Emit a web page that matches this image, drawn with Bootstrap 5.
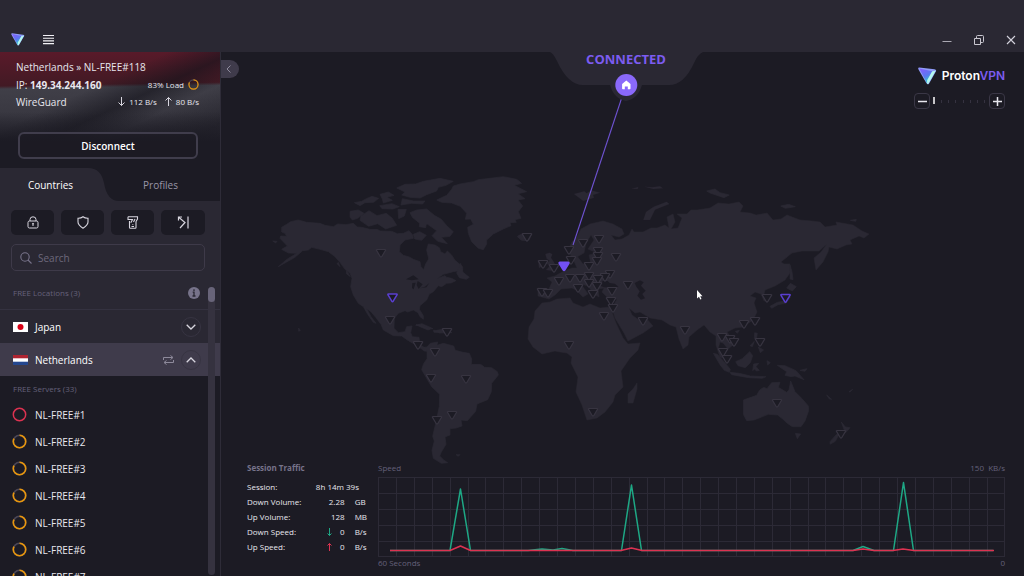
<!DOCTYPE html>
<html lang="en">
<head>
<meta charset="utf-8">
<meta name="viewport" content="width=device-width, initial-scale=1">
<title>ProtonVPN</title>
<link rel="stylesheet" href="https://cdn.jsdelivr.net/npm/bootstrap@5.3.0/dist/css/bootstrap.min.css">
<style>
:root{--deep:#1c1b24;--raised:#2a2833;--muted:#65617a;--accent:#7c5cf0;--amber:#e8960c}
body{font-family:"Open Sans",sans-serif;font-size:10px;line-height:14px;color:#e8e7ee;background:var(--deep);height:100vh;overflow:hidden}
button{color:inherit}
svg{display:block;flex:none}
.topbar{flex:none;background:var(--raised);height:52px;padding:27px 8px 0 11px;gap:18px}
.window-buttons{gap:22px}
.workspace{min-height:0}
.plain{background:none;border:0;padding:0}
.sidebar{width:221px;flex:none;background:var(--raised);border-right:1px solid #2e2c38}
.status{flex:none;height:116px;padding:8px 21px 0 16px;background:linear-gradient(180deg,#0000 60px,#1c1b24 90px),linear-gradient(155deg,#0000 36%,#14131b99 50%,#0000 62%,#14131b66 80%,#0000),linear-gradient(179deg,#5a1a2a 0,#421a24 34px,#403f48 37px,#33323b 84px,#1c1b24 100%)}
.status .row-line{height:17px}
.status .meter{font-size:8px}
.disconnect{font-weight:600;height:27px;margin-left:2px;border:2px solid #403d4c;border-radius:6px;color:#fff;background:#1c1b2488;line-height:14px;width:180px;padding:0}
.tabs-row{flex:none;height:33px;background:var(--deep)}
.tabs-row button{position:relative;padding:0}
.tabs-row .tab-shape{position:absolute;left:0;top:0}
.tabs-row .first{width:101px}
.tabs-row .idle{color:#9996a6}
.tools{flex:none;padding:9px 15px 0 11px;gap:7px}
.tools button{height:25px;background:var(--deep);border-radius:5px}
.search{flex:none;margin:9px 15px 0 11px;height:27px;border:1px solid #3e3a49;border-radius:5px;padding:0 8px;gap:6px}
.search input{background:none;border:0;outline:0;min-width:0;color:#fff;font-size:10px;padding:0}
.search input::placeholder{color:#6d697c;opacity:1}
.caption{font-size:8px;color:var(--muted);padding:0 20px 0 13px}
.locations{height:39px;padding-top:6px;border-bottom:1px solid #343240}
.country{height:33px;padding:0 19px 0 13px;gap:7px;color:#fff}
.country.open{background:#3f3b4b}
.round{width:20px;height:20px;border:1px solid #373442!important;border-radius:50%}
.servers{background:var(--deep)}
.servers .caption{height:25px}
.servers li{height:27px;padding-left:12px;gap:8px}
.scrolltrack{position:absolute;right:5px;top:16px;bottom:1px;width:7px;background:#35323f;border-radius:4px}
.scrollthumb{height:15px;background:#686479;border-radius:4px}
.world{position:absolute;inset:0;width:100%;height:100%}
.collapse-tab{position:absolute;left:0;top:8px;width:18px;height:18px;background:#3f3b4b;border-radius:0 9px 9px 0}
.connected{position:absolute;left:0;right:0;top:0;margin-left:7px;text-align:center;color:var(--accent);font-size:13px;font-weight:700}
.brand-block{position:absolute;right:19px;top:15px}
.brand-name{gap:5px}
.wordmark{font-family:Inter,sans-serif;font-size:12px;font-weight:600;color:#fff}
.wordmark span{color:var(--accent)}
.zoom{gap:3px}
.zoom button{width:16px;height:16px;border:1px solid #3a3746;border-radius:4px}
.traffic{position:absolute;left:26px;right:19px;bottom:7px;gap:11px}
.stats{width:120px;flex:none;font-size:8px}
.stats h2{font-size:8px;font-weight:700;color:#77738a;line-height:14px;margin:0 0 4px}
.stats table{width:120px;line-height:15px}
.stats th{font-weight:400}
.stats td,.stats th{padding:0;white-space:nowrap}
.stats .unit{width:22px;padding-left:10px}
.chart-label{font-size:8px;color:var(--muted);line-height:14px}
.chart{width:100%;height:80px;margin-top:2px}
.chart-foot{height:12px;line-height:12px}
</style>
</head>
<body class="d-flex flex-column">
<svg width="0" height="0" class="position-absolute" aria-hidden="true">
  <defs>
    <linearGradient id="brand-face" x1="0" y1="0" x2=".5" y2="1"><stop offset="0" stop-color="#8a5cff"/><stop offset=".6" stop-color="#5a78f0"/><stop offset="1" stop-color="#30d8c8"/></linearGradient>
    <symbol id="logo" viewBox="0 0 18 17"><path d="M1.200.4 15.600 2.200q2.200.3 1.300 2.100L10.500 15.500q-1 1.500-2.200.2Q7.700 15 .5 2.300-.4.500 1.200.400Z" fill="#8f9cf8"/><path d="M1.200 1.400 13.600 3.900 9.200 12 8.700 15.600Z" fill="url(#brand-face)"/><path d="M13.300 4.200 16.900 3.400 10 15.700 8.700 16.200 8.600 12.800Z" fill="#b4f8ee"/></symbol>
    <symbol id="pin" viewBox="-7 -6 14 13" overflow="visible"><path d="M-4-3.500H4Q5-3.500 4.500-2.600L.7 3.700Q0 4.700-.7 3.700L-4.500-2.600Q-5-3.500-4-3.500Z"/></symbol>
    <symbol id="load" viewBox="0 0 14 14"><circle cx="7" cy="7" r="5.800" fill="none" stroke="#4a4656" stroke-width="1.500"/><circle cx="7" cy="7" r="5.800" fill="none" stroke="#e8960c" stroke-width="1.500" pathLength="100" stroke-dasharray="83 17" transform="rotate(-90 7 7)"/></symbol>
  </defs>
</svg>

<header class="topbar d-flex align-items-center">
  <svg width="14" height="13"><use href="#logo"/></svg>
  <button class="plain" aria-label="Menu"><svg width="11" height="11" stroke="#f2f1f6" stroke-width="1.100"><path d="M0 1.500H11M0 4.200H11M0 6.900H11M0 9.600H11"/></svg></button>
  <div class="window-buttons d-flex align-items-center ms-auto">
    <button class="plain" aria-label="Minimize"><svg width="10" height="10" stroke="#aaa8b3"><path d="M.5 6.500H9.500"/></svg></button>
    <button class="plain" aria-label="Restore"><svg width="10" height="10" fill="none" stroke="#c9c7d0"><path d="M.5 3.500H6.500V9.500H.5ZM2.500 3.500V1.500Q2.500.5 3.500.5H8.500Q9.500.5 9.500 1.500V6.500Q9.500 7.500 8.500 7.500H6.500"/></svg></button>
    <button class="plain" aria-label="Close"><svg width="10" height="10" stroke="#d4d2dc" stroke-width="1.100"><path d="M1 1 9 9M9 1 1 9"/></svg></button>
  </div>
</header>

<div class="workspace d-flex flex-grow-1 overflow-hidden">
<aside class="sidebar d-flex flex-column overflow-hidden">
  <section class="status">
    <div class="server">Netherlands » NL-FREE#118</div>
    <div class="row-line d-flex align-items-center justify-content-between pt-1"><span>IP: <b>149.34.244.160</b></span><span class="meter d-flex align-items-center gap-1">83% Load <svg width="11" height="11"><use href="#load"/></svg></span></div>
    <div class="row-line d-flex align-items-center justify-content-between pt-1"><span>WireGuard</span><span class="meter d-flex align-items-center gap-1"><svg width="7" height="9" fill="none" stroke="#d8d6df"><path d="M3.500 0V8.500M.5 5.500 3.500 8.500 6.500 5.500"/></svg>112 B/s <svg class="ms-1" width="7" height="9" fill="none" stroke="#d8d6df"><path d="M3.500 9V.5M.5 3.500 3.500.5 6.500 3.500"/></svg>80 B/s</span></div>
    <div class="pt-3"><button class="disconnect mt-2">Disconnect</button></div>
  </section>
  <div class="tabs-row position-relative d-flex" role="tablist">
    <svg class="tab-shape" width="220" height="33"><path d="M0 33V0H88Q101 0 104 15 107 33 119 33Z" fill="#2a2833"/></svg>
    <button class="plain first text-white" role="tab" aria-selected="true">Countries</button>
    <button class="plain idle flex-fill" role="tab" aria-selected="false">Profiles</button>
  </div>
  <div class="tools d-flex">
    <button class="plain flex-fill d-flex align-items-center justify-content-center" aria-label="Secure Core"><svg width="12" height="13" fill="none" stroke="#d8d6df"><rect x="1" y="5" width="10" height="7" rx="1.500"/><path d="M3 5V3.500Q3 .8 6 .8T9 3.500V5M6 7.500V10"/><circle cx="6" cy="7.700" r=".5"/></svg></button>
    <button class="plain flex-fill d-flex align-items-center justify-content-center" aria-label="NetShield"><svg width="12" height="13" fill="none" stroke="#d8d6df" stroke-width="1.100"><path d="M6 .8Q8 2.400 11 2.300V6Q11 9 6 12.200 1 9 1 6V2.300Q4 2.400 6 .8Z"/></svg></button>
    <button class="plain flex-fill d-flex align-items-center justify-content-center" aria-label="Kill Switch"><svg width="12" height="13" fill="none" stroke="#d8d6df" stroke-width="1.100"><path d="M2.500 5V11.500Q2.500 12.300 3.300 12.300H8.300Q9 12.300 9 11.500V5.500M1 .8H10.500V3L9 5.500M1 .8V3.500H5.500L3.800 6.800M8 3 6.500 6"/><path d="M5.800 8V8.800M4.500 10.500H7"/></svg></button>
    <button class="plain flex-fill d-flex align-items-center justify-content-center" aria-label="Port forwarding"><svg width="13" height="13" fill="none" stroke="#d8d6df" stroke-width="1.200"><path d="M2 1.500 8 6.500 3 12M1.500 4.500V1H5M11 .5V12.500"/></svg></button>
  </div>
  <label class="search d-flex align-items-center"><svg width="12" height="12" fill="none" stroke="#77738a" stroke-width="1.100"><circle cx="5" cy="5" r="4.200"/><path d="M8 8 11.500 11.500"/></svg><input type="search" class="flex-fill" placeholder="Search" aria-label="Search"></label>
  <div class="position-relative flex-grow-1 overflow-hidden">
    <div class="locations caption d-flex align-items-center justify-content-between"><span>FREE Locations (3)</span><svg width="12" height="12"><circle cx="6" cy="6" r="6" fill="#77738a"/><path d="M6 2.300V4M4.700 5.200H6V9M4.500 9H7.500" fill="none" stroke="#2a2833" stroke-width="1.300"/></svg></div>
    <div class="country d-flex align-items-center"><svg width="15" height="10"><path d="M0 0H15V10H0Z" fill="#fff"/><circle cx="7.500" cy="5" r="3" fill="#d80016"/></svg><span>Japan</span><button class="plain round ms-auto d-flex align-items-center justify-content-center" aria-label="Expand Japan"><svg width="10" height="6" fill="none" stroke="#d8d6df" stroke-width="1.300"><path d="M.7.700 5 5 9.300.7"/></svg></button></div>
    <div class="country open d-flex align-items-center"><svg width="15" height="10"><path d="M0 0H15V10H0Z" fill="#fff"/><path d="M0 0H15V3.300H0Z" fill="#ae2431"/><path d="M0 6.700H15V10H0Z" fill="#24478f"/></svg><span>Netherlands</span><svg class="ms-auto" width="11" height="10" fill="none" stroke="#8e8a9b"><path d="M.5 5V2.500H9.500M7.500.5 10 2.500 7.500 4.500M10.500 5V7.500H1.500M3.500 5.500 1 7.500 3.500 9.500"/></svg><button class="plain round d-flex align-items-center justify-content-center" aria-label="Collapse Netherlands"><svg width="10" height="6" fill="none" stroke="#d8d6df" stroke-width="1.300"><path d="M.7 5.300 5 1 9.300 5.300"/></svg></button></div>
    <div class="servers">
      <div class="caption d-flex align-items-center">FREE Servers (33)</div>
      <ul class="list-unstyled mb-0">
        <li class="d-flex align-items-center"><svg width="15" height="15" fill="none" stroke="#dc3251" stroke-width="1.500"><circle cx="7.500" cy="7.500" r="6.200"/></svg>NL-FREE#1</li>
        <li class="d-flex align-items-center"><svg width="15" height="15"><use href="#load"/></svg>NL-FREE#2</li>
        <li class="d-flex align-items-center"><svg width="15" height="15"><use href="#load"/></svg>NL-FREE#3</li>
        <li class="d-flex align-items-center"><svg width="15" height="15"><use href="#load"/></svg>NL-FREE#4</li>
        <li class="d-flex align-items-center"><svg width="15" height="15"><use href="#load"/></svg>NL-FREE#5</li>
        <li class="d-flex align-items-center"><svg width="15" height="15"><use href="#load"/></svg>NL-FREE#6</li>
        <li class="d-flex align-items-center"><svg width="15" height="15"><use href="#load"/></svg>NL-FREE#7</li>
      </ul>
    </div>
    <div class="scrolltrack"><div class="scrollthumb"></div></div>
  </div>
</aside>

<main class="position-relative flex-grow-1 overflow-hidden">
  <svg class="world" viewBox="221 52 803 524" preserveAspectRatio="xMidYMin meet" role="img" aria-label="World map of server locations">
    <g fill="#2a2833" stroke="#2a2833" stroke-width=".5" stroke-linejoin="round">
      <!-- North America and Greenland -->
      <g transform="translate(270 170) scale(.33333)" stroke-width="2">
        <path d="M35 172 50 163 62 155 85 150 110 157 150 160 165 166 190 170 203 162 228 164 250 160 262 171 275 172 300 178 322 178 330 183 365 184 382 191 400 190 417 182 428 195 430 205 405 210 390 225 388 245 400 256 418 261 430 268 450 275 453 290 461 299 467 282 476 267 470 240 475 222 495 225 508 233 512 245 525 252 532 243 545 255 555 271 578 290 578 300 550 305 520 313 500 326 525 317 530 322 545 325 558 332 543 339 530 340 515 350 505 347 490 365 478 372 470 390 450 407 448 418 460 437 460 448 450 440 444 428 430 420 413 426 405 422 385 430 373 445 372 475 385 488 405 485 410 470 426 468 422 488 427 500 447 502 450 525 468 535 478 531 490 538 480 545 463 543 440 526 415 512 395 498 370 497 340 480 333 463 318 443 303 425 290 416 303 440 318 460 310 457 293 433 280 410 265 400 250 375 242 350 246 325 240 310 225 298 210 277 195 260 175 245 150 238 125 232 115 240 98 242 75 262 50 276 25 290 52 267 80 250 55 249 35 238 52 228 30 205 32 198 50 199 45 190 35 186Z"/>
        <path d="M500 90 530 76 545 58 550 48 570 42 610 35 625 29 660 25 700 20 740 28 755 40 733 46 770 65 744 71 765 86 744 90 758 108 745 125 753 145 735 149 739 157 720 158 723 167 700 177 670 192 650 210 650 222 640 239 625 235 605 215 595 190 593 172 610 163 602 147 586 148 590 130 571 109 545 99 515 97Z"/>
        <path d="M380 54 405 43 437 42 460 34 510 25 550 34 528 46 505 52 500 63 470 74 450 84 420 82 395 75 405 66ZM397 86 431 93 465 93 458 102 425 100 393 105ZM240 124 265 120 282 130 263 145 247 150 240 141ZM253 98 275 94 289 86 306 79 326 85 311 97 285 98 270 107ZM330 73 355 66 372 76 351 82 367 91 340 99 337 87ZM273 138 297 122 321 137 349 130 367 145 380 166 347 177 323 161 296 169 270 151ZM384 118 409 118 403 138 386 146ZM420 128 440 120 470 117 493 136 514 148 531 168 550 185 540 199 514 202 532 221 503 214 486 197 500 182 473 163 447 158 427 142ZM430 193 449 185 469 196 455 211 434 207ZM329 107 366 101 388 110 369 117 336 116ZM450 150 469 160 467 173 448 170ZM572 280 579 307 598 322 589 328 568 323 560 309ZM742 200 761 192 780 200 774 212 755 211ZM8 213 21 214 17 219ZM86 474 91 482 86 484ZM205 277 210 290 201 281ZM230 302 241 320 229 311ZM437 466 456 461 489 476 477 477 454 467ZM500 481 518 478 546 488 507 489Z"/>
        <path d="M408 328 430 316 446 328 425 331ZM427 339 437 338 431 358 426 354ZM443 333 458 343 446 357 440 345ZM450 355 465 350 478 339 469 352Z" fill="#1c1b24" stroke="none"/>
      </g>
      <!-- South America -->
      <path transform="translate(360 320) scale(.33333)" stroke-width="2" d="M185 83 201 81 211 70 233 66 231 76 250 70 281 78 286 91 309 97 328 100 335 117 334 133 362 133 374 142 395 143 412 155 415 165 395 190 394 215 383 239 351 252 347 274 322 302 303 300 306 318 289 324 270 326 270 345 255 351 258 373 244 396 239 408 252 421 263 428 244 430 220 415 216 391 223 363 218 349 229 302 238 259 239 223 215 200 203 180 185 149 190 133 201 116 201 91ZM288 404 300 404 295 409ZM168 14 185 15 211 27 204 30 180 20ZM220 31 240 32 248 38 222 37Z"/>
      <!-- Africa and Madagascar -->
      <path d="M542 303 550 302 557 299 570 298 573 303 583 307 590 304 600 308 610 307 616 323 623 338 628 344 640 343 638 350 630 358 621 371 623 387 615 395 613 402 605 412 597 418 587 420 582 405 576 392 578 377 571 363 572 357 567 353 560 352 555 351 542 354 533 347 528 339 529 327 534 319 535 311ZM637 383 637 389 633 403 628 403 628 394 633 389Z"/>
      <!-- Europe and Asia -->
      <path d="M568 250 572 242 577 237 581 229 590 224 603 221 613 224 622 229 624 234 619 237 611 235 615 240 622 239 629 235 632 229 634 232 643 232 651 228 657 228 665 225 669 228 667 217 673 214 675 222 671 229 678 228 682 218 677 214 687 214 691 210 697 210 710 208 718 203 729 204 739 202 743 206 740 212 750 213 756 215 767 213 773 220 781 219 787 215 800 220 812 221 820 222 825 227 837 225 836 222 853 225 862 231 869 234 864 238 859 236 850 240 852 244 846 245 837 249 829 247 828 252 823 262 816 270 814 258 821 252 827 244 819 251 810 251 802 251 792 253 781 262 784 264 790 264 790 273 785 280 775 286 765 290 764 294 769 300 764 301 761 294 755 292 750 296 756 298 754 303 757 312 753 320 743 327 735 328 727 332 733 340 733 345 728 349 723 343 720 342 718 349 723 358 720 357 716 345 716 336 710 332 704 325 697 330 689 337 688 345 683 349 679 339 676 327 670 325 662 320 650 318 640 312 635 313 629 308 632 315 639 320 646 318 653 326 643 333 628 341 624 333 615 318 612 308 617 299 607 297 602 292 604 288 598 289 599 297 594 294 588 286 581 284 588 294 583 297 576 290 572 288 561 289 555 295 549 299 538 296 538 288 549 289 552 282 547 278 555 276 562 272 572 268 577 268 573 259 577 256 583 264 591 264 589 255 597 253 588 249 594 240 591 235 586 243 584 253 577 257 571 256Z"/>
      <g transform="translate(510 170) scale(.33333)">
        <path d="M400 150 408 126 431 110 470 95 478 102 435 119 420 150ZM192 72 223 64 230 70 243 61 270 68 249 75 252 83 220 93ZM106 252 119 248 127 253 123 263 132 277 142 296 126 302 108 300 119 289 110 280 119 272 110 266ZM85 274 98 273 103 286 87 294ZM23 197 38 190 64 195 59 210 32 209ZM365 56 385 51 383 57ZM404 50 426 52 450 49 459 55 430 57Z"/>
        <g fill="#1c1b24"><path d="M266 346 279 332 293 333 299 339 315 341 325 350 309 354 282 352ZM374 339 390 331 401 337 393 347 407 362 397 372 405 385 393 389 382 377 389 364 379 350Z"/></g>
      </g>
      <!-- Pacific islands, Japan, Indonesia, Australia, New Zealand -->
      <path transform="translate(690 190) scale(.33333)" stroke-width="2" d="M50 3 75-3 90 8 118 15 102 23 78 15 60 9ZM272 48 296 43 316 50 286 55ZM481 91 499 88 497 94ZM300 225 306 245 309 269 300 267ZM301 280 319 290 307 303 290 294ZM294 312 301 322 288 340 264 344 245 355 240 349 262 337 284 333ZM194 428 202 430 199 447 205 456 193 445ZM205 471 221 480 211 488ZM180 467 193 454 187 470ZM70 490 82 493 102 515 121 538 118 547 103 541 90 524ZM120 547 148 550 181 558 228 560 217 565 176 563 125 554ZM137 515 157 506 179 485 188 497 181 518 166 533 144 527ZM191 522 206 520 198 530 208 541 199 543 194 537 188 542ZM231 512 233 525 241 518ZM262 526 285 527 318 542 342 569 315 558 303 560 285 556 290 545ZM330 541 351 536 345 544ZM160 630 183 622 200 616 209 600 221 592 231 596 245 578 270 577 265 592 290 607 297 600 302 573 315 605 335 625 355 648 356 662 345 693 333 710 307 710 292 700 278 687 263 675 235 673 215 681 192 690 170 692 160 673ZM316 730 332 732 322 746ZM454 696 466 711 480 713 471 724 456 735 463 721ZM450 727 436 754 420 763 420 755 438 735ZM410 615 425 628 418 627ZM477 605 488 598 480 606ZM136 424 148 421 142 430Z"/>
    </g>
    <g fill="#1c1b24" stroke="#373440" stroke-width="1.200" id="pins"></g>
    <!-- Active route -->
    <path d="M622 97 573 245" fill="none" stroke="#7c5cf0" stroke-width="1.100" opacity=".85"/>
    <g stroke="#5a3fd0" stroke-width="1.500" fill="#1c1b24"><use href="#pin" x="385.500" y="291.500" width="14" height="13"/><use href="#pin" x="778.500" y="292" width="14" height="13"/><use href="#pin" x="557" y="260" width="14" height="13" fill="#7350f5" stroke="#7350f5" stroke-width="2"/></g>
    <!-- Connection plate -->
    <path d="M550 52Q553 53 557 61 568 85 583 85H610Q614 99 626 101 638 99 642 85H669Q684 85 694 63 698 54 703 52Z" fill="#2a2833"/>
    <circle cx="626.300" cy="85" r="11" fill="#8a69fa"/><path d="M626.300 80.500 630.500 84V88.500Q630.500 89.300 629.700 89.300H627.800V86.500H624.800V89.300H622.900Q622.100 89.300 622.100 88.500V84Z" fill="#fff"/>
    <path d="M697 290V298.500L699 296.700 700.300 299.500 701.500 299 700.200 296.300H702.500Z" fill="#fff"/>
  </svg>

  <button class="plain collapse-tab d-flex align-items-center justify-content-center" aria-label="Collapse sidebar"><svg class="me-1" width="5" height="8" fill="none" stroke="#8f8b9d"><path d="M4.500.5 1 4 4.500 7.500"/></svg></button>
  <div class="connected">CONNECTED</div>

  <div class="brand-block d-flex flex-column align-items-end">
    <div class="brand-name d-flex align-items-center"><svg width="19" height="18"><use href="#logo"/></svg><span class="wordmark">Proton<span>VPN</span></span></div>
    <div class="zoom d-flex align-items-center mt-2">
      <button class="plain d-flex align-items-center justify-content-center" aria-label="Zoom out"><svg width="9" height="9" stroke="#e8e7ee" stroke-width="1.500"><path d="M0 4.500H9"/></svg></button>
      <svg width="53" height="8" stroke="#353240"><path d="M8.500 3V6M15.500 3V6M22.500 3V6M30.500 3V6M37.500 3V6M44.500 3V6M51.500 3V6"/><path d="M1 0V7" stroke="#fff" stroke-width="1.500"/></svg>
      <button class="plain d-flex align-items-center justify-content-center" aria-label="Zoom in"><svg width="9" height="9" stroke="#e8e7ee" stroke-width="1.500"><path d="M0 4.500H9M4.500 0V9"/></svg></button>
    </div>
  </div>

  <section class="traffic d-flex">
    <div class="stats">
      <h2>Session Traffic</h2>
      <table>
        <tr><th scope="row">Session:</th><td class="text-end" colspan="2"><span class="me-2">8h 14m 39s</span></td></tr>
        <tr><th scope="row">Down Volume:</th><td class="text-end">2.28</td><td class="unit">GB</td></tr>
        <tr><th scope="row">Up Volume:</th><td class="text-end">128</td><td class="unit">MB</td></tr>
        <tr><th scope="row">Down Speed:</th><td><span class="d-flex align-items-center justify-content-end gap-2"><svg width="5" height="8" fill="none" stroke="#1ea885"><path d="M2.500 0V7.500M.5 5.500 2.500 7.500 4.500 5.500"/></svg>0</span></td><td class="unit">B/s</td></tr>
        <tr><th scope="row">Up Speed:</th><td><span class="d-flex align-items-center justify-content-end gap-2"><svg width="5" height="8" fill="none" stroke="#dc3251"><path d="M2.500 8V.5M.5 2.500 2.500.5 4.500 2.500"/></svg>0</span></td><td class="unit">B/s</td></tr>
      </table>
    </div>
    <div class="flex-grow-1">
      <div class="chart-label d-flex justify-content-between"><span>Speed</span><span>150&nbsp; KB/s</span></div>
      <svg class="chart" viewBox="0 0 627 80" preserveAspectRatio="none" role="img" aria-label="Speed over 60 seconds">
        <g id="grid" stroke="#2c2a36" stroke-width="1"></g>
        <g fill="none" stroke-width="1.500" stroke-linejoin="round">
          <path stroke="#1ea885" d="M12 73.500H72L82.500 12 92.500 73.500H150L164 72 175 73 184 71.500 195 73.500H243.500L253.500 8 263.500 73.500H475L485 69.500 496 73.500H515.500L525.500 5.500 535.500 73.500H615"/>
          <path stroke="#dc3251" d="M12 73.500H72L82.500 69 92.500 73.500H243L253.500 71 264 73.500H475L485 72 496 73.500H515L525 72 536 73.500H616"/>
        </g>
      </svg>
      <div class="chart-label chart-foot d-flex justify-content-between"><span>60 Seconds</span><span>0</span></div>
    </div>
  </section>
</main>
</div>
<script src="https://cdn.jsdelivr.net/npm/bootstrap@5.3.0/dist/js/bootstrap.bundle.min.js"></script>
<script>
const NS='http://www.w3.org/2000/svg';
const servers=[[381,253],[390,320],[447,332],[418,345],[527,237],[569,250],[583,243],[599,239],[598,251],[598,256],[597,261],[616,257],[571,260],[543,264],[554,268],[589,266],[610,274],[605,277],[570,278],[580,278],[589,276],[589,283],[598,279],[559,281],[578,288],[597,286],[628,285],[612,291],[593,294],[542,292],[548,293],[611,301],[613,308],[604,316],[643,321],[685,330],[767,298],[755,321],[744,324],[722,337],[730,339],[734,342],[760,342],[723,352],[727,359],[777,403],[841,434],[435,352],[431,378],[466,379],[452,415],[437,420],[569,345],[593,412]];
for(const [x,y] of servers){
  const u=document.createElementNS(NS,'use');
  for(const [k,v] of Object.entries({href:'#pin',x:x-7,y:y-6,width:14,height:13}))u.setAttribute(k,v);
  document.getElementById('pins').append(u);
}
const line=d=>{const p=document.createElementNS(NS,'path');p.setAttribute('d',d);document.getElementById('grid').append(p)};
for(let i=0;i<=35;i++)line(`M${Math.min(626,Math.round(i*17.9))+.5} 0V80`);
for(let i=0;i<=5;i++)line(`M0 ${Math.min(79,i*16)+.5}H627`);
</script>
</body>
</html>
